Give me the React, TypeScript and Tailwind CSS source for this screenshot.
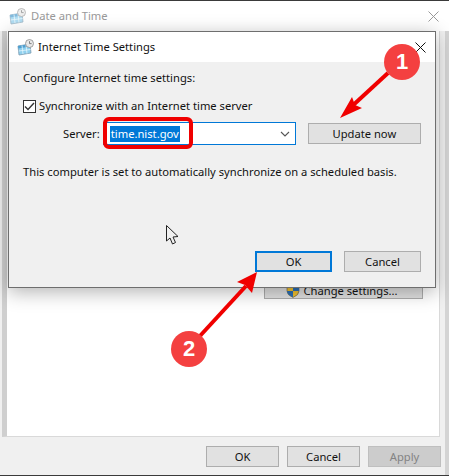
const font = "font-['Noto_Sans',sans-serif] text-[11.2px] leading-4 text-[#111]";

function ClockIcon({ faded }: { faded?: boolean }) {
  return (
    <svg width="18" height="17" viewBox="0 0 18 17" className={faded ? "shrink-0 opacity-70" : "shrink-0"}>
      <path d="M1 7 L13 5 L14 14 L2 16 Z" fill="#8fd0ee" stroke="#7c9bb0" strokeWidth="0.8" />
      <path d="M1 7 L13 5 L13.3 7.6 L1.3 9.6 Z" fill="#4f9fd0" />
      <path d="M5 6.5 L6 15 M9 6 L10 14.5 M1.6 12 L13.6 10.5" stroke="#e6f6fd" strokeWidth="0.8" />
      <circle cx="12.5" cy="4.5" r="4" fill="#e8e8e8" stroke="#8d8d8d" strokeWidth="0.8" />
      <path d="M12.5 2.2 V4.6 H14.6" fill="none" stroke="#666" strokeWidth="0.8" />
    </svg>
  );
}

function CloseIcon({ color }: { color: string }) {
  return (
    <svg width="11" height="11" viewBox="0 0 11 11">
      <path d="M0.5 0.5 L10.5 10.5 M10.5 0.5 L0.5 10.5" stroke={color} strokeWidth="1" />
    </svg>
  );
}

function Shield() {
  return (
    <svg width="14" height="14" viewBox="0 0 14 14" className="shrink-0">
      <path d="M1 2 Q4 2 7 0.5 Q10 2 13 2 V7 Q13 11 7 13.5 Q1 11 1 7 Z" fill="#f2c230" stroke="#555" strokeWidth="0.6" />
      <path d="M7 0.8 Q10 2 13 2 V7 H7 Z M7 7 H1 Q1 11 7 13.3 Z" fill="#2c6fb5" />
    </svg>
  );
}

function Btn({ label, className }: { label: string; className: string }) {
  return (
    <div className={`flex h-[21px] items-center justify-center ${className}`}>{label}</div>
  );
}

export default function App() {
  return (
    <div className={`relative h-[476px] w-[449px] overflow-hidden bg-[#3a3a3a] ${font}`}>
      {/* back window */}
      <div className="absolute left-0 top-[1px] flex h-[474px] w-[449px] flex-col bg-[#f0f0f0]">
        <div className="flex h-[30px] shrink-0 items-center justify-between bg-white pl-[9px] pr-[10px]">
          <div className="flex items-center gap-[4px] text-[#999]">
            <ClockIcon faded />
            <span>Date and Time</span>
          </div>
          <CloseIcon color="#999" />
        </div>
        <div className="ml-[2px] mr-[9px] h-[406px] shrink-0 border-b border-r border-l-[5px] border-b-[#d9d9d9] border-r-[#d9d9d9] border-l-[#cfcfcf] bg-white pt-[252px]">
          <div className="ml-[257px] flex h-[16px] w-[159px] items-center justify-center gap-[3px] border-x border-b border-[#adadad] bg-[#e1e1e1] pr-[3px]">
            <Shield />
            <span>Change settings...</span>
          </div>
        </div>
        <div className="flex justify-end gap-[8px] pr-[8px] pt-[9px]">
          <Btn label="OK" className="w-[73px] border border-[#adadad] bg-[#e1e1e1]" />
          <Btn label="Cancel" className="w-[73px] border border-[#adadad] bg-[#e1e1e1]" />
          <Btn label="Apply" className="w-[73px] border border-[#bfbfbf] bg-[#cccccc] text-[#838383]" />
        </div>
      </div>
      <div className="absolute right-0 top-[31px] h-[444px] w-[4px] bg-[#d4d4d4]" />

      {/* dialog */}
      <div className="absolute left-[8px] top-[31px] flex h-[257px] w-[428px] flex-col border border-[#6e6e6e] bg-[#f0f0f0] shadow-[0_4px_18px_rgba(0,0,0,0.3)]">
        <div className="flex h-[30px] shrink-0 items-center justify-between bg-white pl-[8px] pr-[9px]">
          <div className="flex items-center gap-[3px]">
            <ClockIcon />
            <span>Internet Time Settings</span>
          </div>
          <CloseIcon color="#111" />
        </div>
        <div className="px-[14px] pt-[8px]">
          <div>Configure Internet time settings:</div>
          <div className="mt-[12px] flex items-center gap-[3px]">
            <span className="flex h-[13px] w-[13px] items-center justify-center border border-[#333] bg-white">
              <svg width="11" height="9" viewBox="0 0 11 9">
                <path d="M1 4.5 L4 7.5 L10 1" fill="none" stroke="#333" strokeWidth="1.4" />
              </svg>
            </span>
            <span>Synchronize with an Internet time server</span>
          </div>
          <div className="mt-[8px] flex items-center">
            <span className="ml-[40px] w-[40px]">Server:</span>
            <div className="flex h-[23px] w-[194px] items-center justify-between border border-[#0078d7] bg-white pl-[6px] pr-[4px]">
              <span className="bg-[#0078d7] px-[1px] text-white">time.nist.gov</span>
              <svg width="10" height="6" viewBox="0 0 10 6" className="mr-[1px]">
                <path d="M1 1 L5 5 L9 1" fill="none" stroke="#555" strokeWidth="1.1" />
              </svg>
            </div>
            <Btn label="Update now" className="ml-[12px] w-[114px] border border-[#adadad] bg-[#e1e1e1]" />
          </div>
          <div className="mt-[19px]">This computer is set to automatically synchronize on a scheduled basis.</div>
          <div className="mt-[71px] flex justify-end gap-[12px]">
            <Btn label="OK" className="w-[77px] border-2 border-[#0078d7] bg-[#e1e1e1]" />
            <Btn label="Cancel" className="w-[77px] border border-[#adadad] bg-[#e1e1e1]" />
          </div>
        </div>
      </div>

      {/* annotations */}
      <div className="absolute left-[103px] top-[117px] h-[32px] w-[90px] rounded-[6px] border-[4px] border-[#f00000]" />
      <svg width="449" height="476" viewBox="0 0 449 476" className="absolute left-0 top-0">
        <path d="M166.5 225.5 V241 L170 238 L172.5 244 L175.5 242.5 L173 237 L178 236.5 Z" fill="#f0f0f0" stroke="#222" strokeWidth="1" />
        <path d="M388 73 L350 108" stroke="#f00000" strokeWidth="4" />
        <path d="M340 118 L352 97 L355 105 L362 108 Z" fill="#f00000" />
        <path d="M199 337 L246 286" stroke="#f00000" strokeWidth="4" />
        <path d="M257 272 L237 282 L245 285 L252 293 Z" fill="#f00000" />
      </svg>
      <div className="absolute left-[384px] top-[44px] flex h-9 w-9 items-center justify-center rounded-full bg-[#f44040] font-['Liberation_Sans',sans-serif] text-[22px] font-bold text-white">1</div>
      <div className="absolute left-[171px] top-[331px] flex h-9 w-9 items-center justify-center rounded-full bg-[#f44040] font-['Liberation_Sans',sans-serif] text-[22px] font-bold text-white">2</div>
    </div>
  );
}
